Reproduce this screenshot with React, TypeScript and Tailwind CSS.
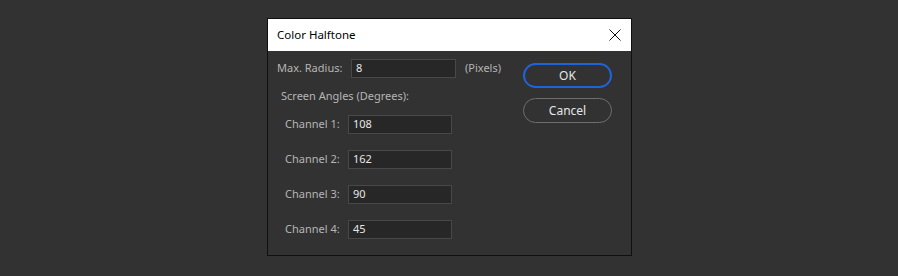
import React from 'react'

const CHANNELS = ['108', '162', '90', '45']

const font = { fontFamily: '"Noto Sans", "Open Sans", sans-serif' }

function Field({ value, w }: { value: string; w: string }) {
  return (
    <div className={`${w} h-[19px] bg-[#272727] border border-[#484848] flex items-center pl-[4px] text-[11px] text-[#e6e6e6]`}>
      {value}
    </div>
  )
}

export default function App() {
  return (
    <div className="w-[898px] h-[276px] bg-[#323232] pt-[18px] pl-[267px]" style={font}>
      <div className="w-[365px] h-[238px] border border-[#101010] bg-[#323232] flex flex-col">
        <div className="h-[32px] bg-white flex items-center pl-[9px] pr-[9px] shrink-0">
          <span className="text-[11.5px] text-black flex-1">Color Halftone</span>
          <svg width="12" height="12" viewBox="0 0 12 12" className="mr-[1px]">
            <path d="M0.5 0.5 L11.5 11.5 M11.5 0.5 L0.5 11.5" stroke="#111" strokeWidth="1" />
          </svg>
        </div>
        <div className="flex pt-[8px]">
          <div className="flex flex-col w-[255px] text-[11px] text-[#b5b5b5]">
            <div className="flex items-center">
              <span className="w-[83px] pl-[9px]">Max. Radius:</span>
              <Field value="8" w="w-[105px]" />
              <span className="pl-[9px]">(Pixels)</span>
            </div>
            <div className="pl-[13px] mt-[8px] h-[20px] leading-[20px]">Screen Angles (Degrees):</div>
            <div className="flex flex-col gap-[16px] mt-[9px]">
              {CHANNELS.map((v, i) => (
                <div key={i} className="flex items-center">
                  <span className="w-[80px] pl-[17px]">Channel {i + 1}:</span>
                  <Field value={v} w="w-[104px]" />
                </div>
              ))}
            </div>
          </div>
          <div className="flex flex-col gap-[10px] pl-[0px] pt-[4px]">
            <button className="w-[89px] h-[25px] rounded-full border-2 border-[#1e64d8] text-[12px] text-[#e6e6e6]">OK</button>
            <button className="w-[89px] h-[25px] rounded-full border border-[#6e6e6e] text-[12px] text-[#e6e6e6]">Cancel</button>
          </div>
        </div>
      </div>
    </div>
  )
}
